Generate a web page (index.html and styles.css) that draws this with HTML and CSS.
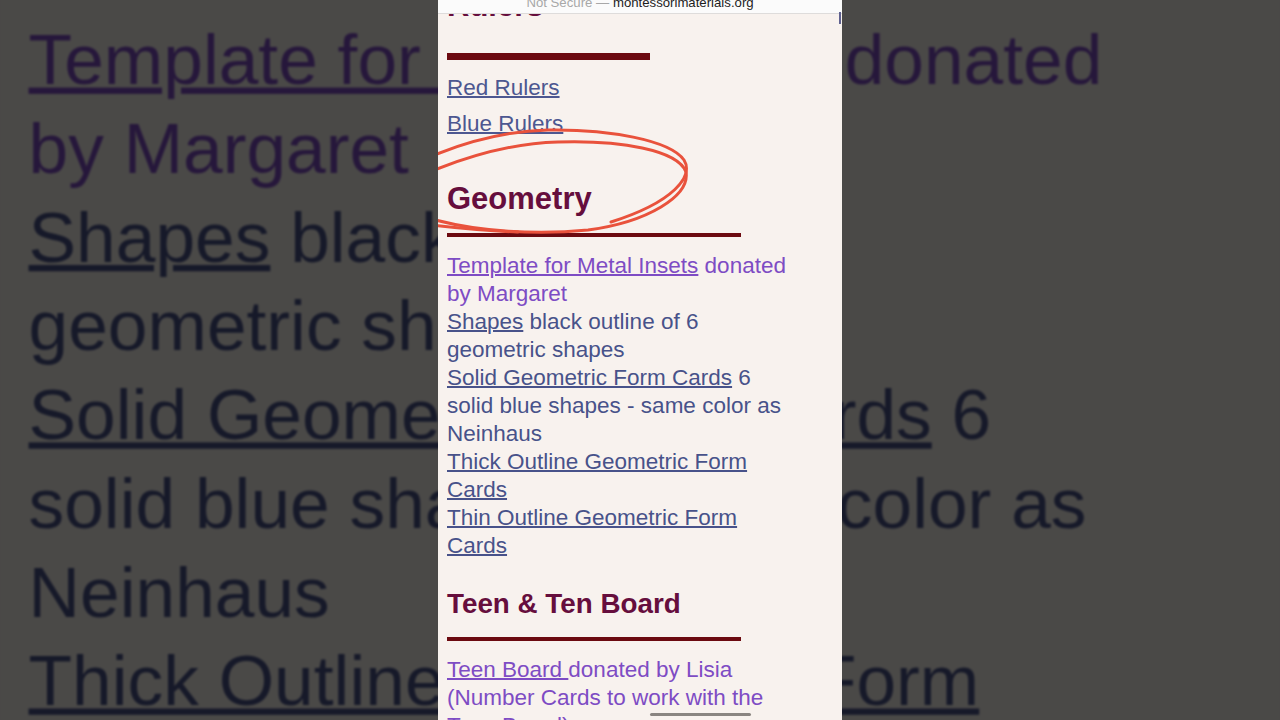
FILE: index.html
```html
<!DOCTYPE html>
<html lang="en">
<head>
    <meta charset="UTF-8">
    <meta name="viewport" content="width=device-width, initial-scale=1.0">
    <title>Montessori Materials</title>
    <link rel="stylesheet" href="styles.css">
</head>
<body>

    <div class="stage">

        <!-- blown-up, darkened copy of the screen behind the phone -->
        <div class="backdrop" aria-hidden="true">
            <div class="screen screen-copy">
                <div class="content">
                    <h2 class="section-title">Rulers</h2>
                    <hr class="rule rule-thick">
                    <ul class="link-list">
                        <li><a href="#">Red Rulers</a></li>
                        <li><a href="#">Blue Rulers</a></li>
                    </ul>

                    <h2 class="section-title section-gap">Geometry</h2>
                    <hr class="rule">
                    <div class="entries">
                        <p class="visited"><a href="#">Template for Metal Insets</a> donated by Margaret</p>
                        <p><a href="#">Shapes</a> black outline of 6 geometric shapes</p>
                        <p><a href="#">Solid Geometric Form Cards</a> 6 solid blue shapes - same color as Neinhaus</p>
                        <p><a href="#">Thick Outline Geometric Form Cards</a></p>
                        <p><a href="#">Thin Outline Geometric Form Cards</a></p>
                    </div>

                    <h3 class="section-title small">Teen &amp; Ten Board</h3>
                    <hr class="rule">
                    <div class="entries">
                        <p class="visited"><a href="#">Teen Board </a>donated by Lisia (Number Cards to work with the Teen Board)</p>
                    </div>
                </div>
            </div>
        </div>

        <div class="phone">
            <div class="screen">
                <div class="content">
                    <h2 class="section-title">Rulers</h2>
                    <hr class="rule rule-thick">
                    <ul class="link-list">
                        <li><a href="#">Red Rulers</a></li>
                        <li><a href="#">Blue Rulers</a></li>
                    </ul>

                    <h2 class="section-title section-gap">Geometry</h2>
                    <hr class="rule">
                    <div class="entries">
                        <p class="visited"><a href="#">Template for Metal Insets</a> donated by Margaret</p>
                        <p><a href="#">Shapes</a> black outline of 6 geometric shapes</p>
                        <p><a href="#">Solid Geometric Form Cards</a> 6 solid blue shapes - same color as Neinhaus</p>
                        <p><a href="#">Thick Outline Geometric Form Cards</a></p>
                        <p><a href="#">Thin Outline Geometric Form Cards</a></p>
                    </div>

                    <h3 class="section-title small">Teen &amp; Ten Board</h3>
                    <hr class="rule">
                    <div class="entries">
                        <p class="visited"><a href="#">Teen Board </a>donated by Lisia (Number Cards to work with the Teen Board)</p>
                    </div>
                </div>
            </div>

            <div class="urlbar">
                <span class="urlbar-text"><span class="insecure">Not Secure — </span><span class="domain">montessorimaterials.org</span></span>
            </div>
            <div class="scroll-thumb"></div>

            <!-- hand drawn marker ring around the heading -->
            <svg class="scribble" viewBox="0 0 404 720" width="404" height="720">
                <path d="M -6 156 C 30 141, 70 131, 110 130 C 170 129, 232 140, 246 160 C 256 176, 236 202, 173 222" />
                <path d="M -6 171 C 36 154, 80 143, 120 142 C 182 140, 240 150, 248 172 C 252 196, 210 222, 150 230 C 100 235, 40 232, -6 219" />
                <path d="M -6 225 C 20 228, 50 231, 80 232" />
            </svg>

            <div class="home-bar"></div>
        </div>

    </div>

</body>
</html>
```

FILE: styles.css
```css
body {
    margin: 0;
    padding: 0;
    background-color: #4a4947;
    font-family: "Liberation Sans", Arial, sans-serif;
}
.stage {
    position: relative;
    width: 1280px;
    height: 720px;
    overflow: hidden;
    background-color: #4a4947;
}
.backdrop {
    position: absolute;
    inset: 0;
    display: flex;
    justify-content: center;
}
.screen-copy {
    transform: scale(3.168);
    transform-origin: center center;
    filter: brightness(0.3) blur(0.35px);
}
.phone {
    position: relative;
    width: 404px;
    height: 720px;
    margin: 0 auto;
    overflow: hidden;
}
.screen {
    width: 404px;
    height: 720px;
    background-color: #f8f2ee;
    overflow: hidden;
    flex-shrink: 0;
}
.content {
    width: 350px;
    padding-left: 9px;
    margin-top: -12px;
}
.section-title {
    font-size: 31px;
    line-height: 36px;
    font-weight: bold;
    color: #660e3d;
    margin: 0;
}
.section-title.small {
    font-size: 27.8px;
    margin-top: 26px;
}
.section-gap {
    margin-top: 39px;
}
.rule {
    border: none;
    height: 4px;
    width: 294px;
    background-color: #6c0a10;
    margin: 16px 0 15px;
}
.section-title.small + .rule {
    margin: 15px 0 15px;
}
.rule-thick {
    height: 7px;
    width: 203px;
    margin: 29px 0 10px;
}
.link-list {
    list-style: none;
    margin: 0;
    padding: 0;
    font-size: 22.5px;
    line-height: 36px;
    color: #4d5790;
}
.link-list a,
.entries a {
    color: inherit;
    text-decoration: underline;
    text-decoration-thickness: 1.5px;
}
.entries p {
    margin: 0;
    font-size: 22.5px;
    line-height: 28px;
    color: #48528a;
}
.entries p.visited {
    color: #7e4cc4;
}
.urlbar {
    position: absolute;
    top: 0;
    left: 0;
    right: 0;
    height: 13px;
    background-color: #fbfbfb;
    border-bottom: 1px solid #dedcdb;
    text-align: center;
    font-size: 13.2px;
    line-height: 13px;
    overflow: hidden;
}
.urlbar-text {
    display: block;
    margin-top: -4px;
}
.insecure {
    color: #a8a8a8;
}
.domain {
    color: #1d1d1d;
}
.scroll-thumb {
    position: absolute;
    top: 12px;
    right: 1px;
    width: 2px;
    height: 12px;
    background-color: #5f6190;
}
.scribble {
    position: absolute;
    top: 0;
    left: 0;
    pointer-events: none;
}
.scribble path {
    fill: none;
    stroke: #e9523c;
    stroke-width: 3px;
    stroke-linecap: round;
}
.home-bar {
    position: absolute;
    left: 212px;
    bottom: 4px;
    width: 101px;
    height: 3px;
    border-radius: 2px;
    background-color: #8a8581;
}
```
